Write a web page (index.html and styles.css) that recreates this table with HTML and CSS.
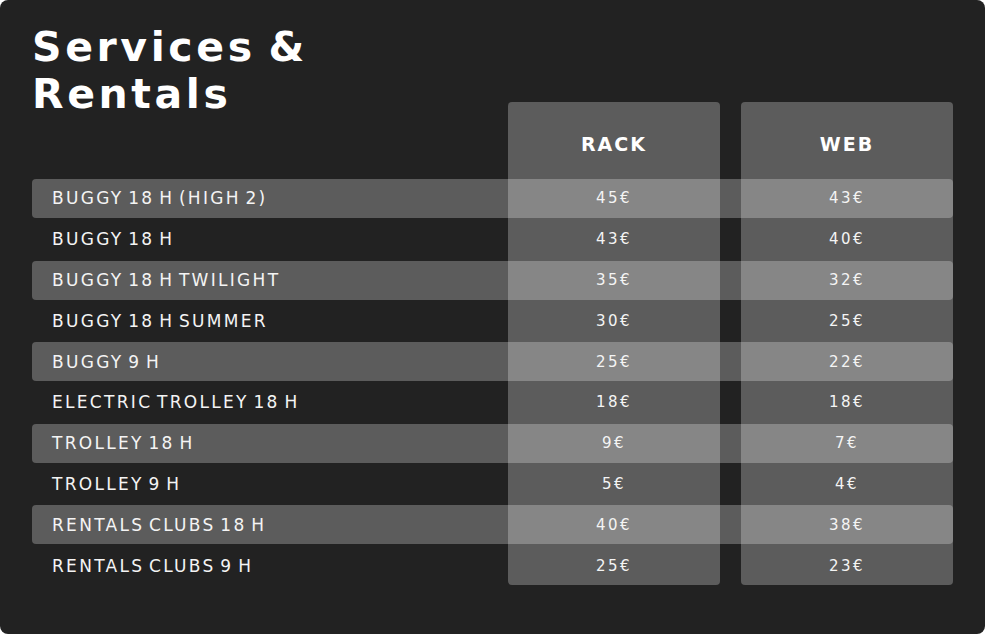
FILE: index.html
```html
<!DOCTYPE html>
<html lang="en">
<head>
<meta charset="utf-8">
<title>Services &amp; Rentals</title>
<link rel="stylesheet" href="styles.css">
</head>
<body>
<main class="card">
  <h1 class="title">Services &amp;<br>Rentals</h1>
  <div class="stack">
    <div class="cols">
      <div class="spacer"></div>
      <div class="col"></div>
      <div class="spacer"></div>
      <div class="col"></div>
    </div>
    <div class="rows">
      <div class="row head"><span></span><span class="h">RACK</span><span></span><span class="h">WEB</span></div>
      <div class="row alt"><span class="name">BUGGY 18 H (HIGH 2)</span><span class="p">45€</span><span></span><span class="p">43€</span></div>
      <div class="row"><span class="name">BUGGY 18 H</span><span class="p">43€</span><span></span><span class="p">40€</span></div>
      <div class="row alt"><span class="name">BUGGY 18 H TWILIGHT</span><span class="p">35€</span><span></span><span class="p">32€</span></div>
      <div class="row"><span class="name">BUGGY 18 H SUMMER</span><span class="p">30€</span><span></span><span class="p">25€</span></div>
      <div class="row alt"><span class="name">BUGGY 9 H</span><span class="p">25€</span><span></span><span class="p">22€</span></div>
      <div class="row"><span class="name">ELECTRIC TROLLEY 18 H</span><span class="p">18€</span><span></span><span class="p">18€</span></div>
      <div class="row alt"><span class="name">TROLLEY 18 H</span><span class="p">9€</span><span></span><span class="p">7€</span></div>
      <div class="row"><span class="name">TROLLEY 9 H</span><span class="p">5€</span><span></span><span class="p">4€</span></div>
      <div class="row alt"><span class="name">RENTALS CLUBS 18 H</span><span class="p">40€</span><span></span><span class="p">38€</span></div>
      <div class="row"><span class="name">RENTALS CLUBS 9 H</span><span class="p">25€</span><span></span><span class="p">23€</span></div>
    </div>
  </div>
</main>
</body>
</html>
```
FILE: styles.css
```css
html, body {
  margin: 0;
  padding: 0;
  background: #ffffff;
}
.card {
  box-sizing: border-box;
  width: 985px;
  height: 634px;
  background: #222222;
  border-radius: 8px;
  padding: 24px 32px 0 32px;
  font-family: "DejaVu Sans", "Liberation Sans", sans-serif;
  color: #f4f4f4;
}
.title {
  margin: 0 0 -16px 0;
  font-size: 41px;
  line-height: 47px;
  font-weight: 700;
  letter-spacing: 3.6px;
  word-spacing: -5px;
  color: #ffffff;
  position: relative;
  z-index: 1;
  width: 400px;
}
.stack {
  display: grid;
}
.stack > * {
  grid-area: 1 / 1;
}
.cols, .row {
  display: grid;
  grid-template-columns: 476px 212px 21px 212px;
}
.col {
  background: rgba(255, 255, 255, 0.262);
  border-radius: 4px;
}
.rows {
  display: flex;
  flex-direction: column;
  gap: 1.8px;
}
.row {
  height: 39px;
  align-items: center;
  border-radius: 4px;
}
.row.head {
  height: 75.2px;
  padding-top: 9px;
  box-sizing: border-box;
}
.row.alt {
  background: rgba(255, 255, 255, 0.262);
}
.h {
  text-align: center;
  font-weight: 700;
  font-size: 19px;
  letter-spacing: 2px;
  color: #ffffff;
}
.name {
  padding-left: 20px;
  font-size: 17px;
  letter-spacing: 2.3px;
  word-spacing: -3px;
}
.p {
  text-align: center;
  font-size: 15px;
  letter-spacing: 2.5px;
}
```
